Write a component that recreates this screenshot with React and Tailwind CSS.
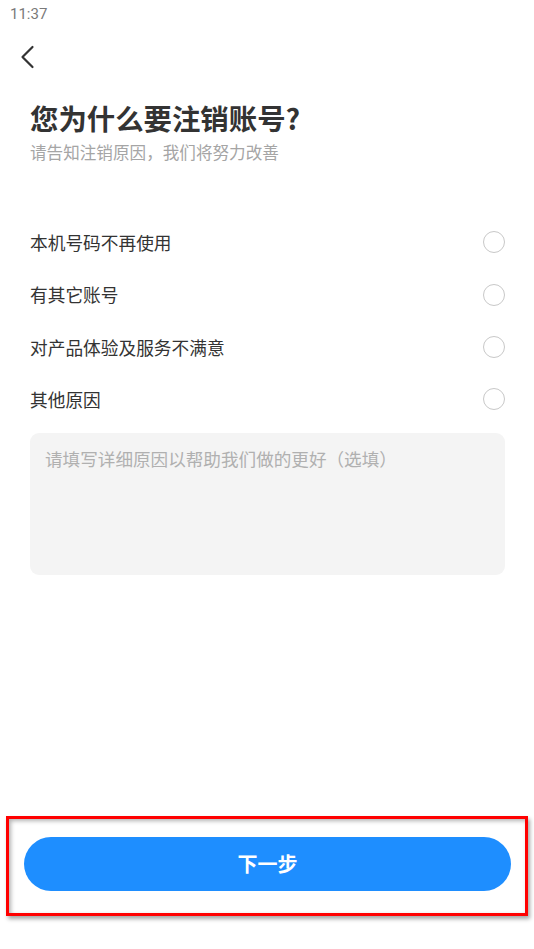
import React from "react";

const font = { fontFamily: '"Noto Sans CJK SC", Roboto, "Noto Sans", sans-serif' };

const options = ["本机号码不再使用", "有其它账号", "对产品体验及服务不满意", "其他原因"];

export default function App() {
  return (
    <div className="w-[534px] h-[949px] bg-white flex flex-col relative overflow-hidden" style={font}>
      <div className="h-[28px] pl-[10px] pt-[3px] text-[15px] leading-[22px] text-[#7a7a7a]" style={{ fontFamily: 'Roboto, "Noto Sans", sans-serif' }}>
        11:37
      </div>
      <div className="h-[58px] pl-[19px] pt-[17px]">
        <svg width="18" height="24" viewBox="0 0 18 24" fill="none">
          <path d="M13.5 2 L3.5 12 L13.5 22" stroke="#333" strokeWidth="2.2" strokeLinecap="round" strokeLinejoin="round" />
        </svg>
      </div>
      <div className="pl-[30px] pr-[29px] pt-[13px]">
        <h1 className="text-[28.4px] leading-[38px] font-bold text-[#333]">您为什么要注销账号?</h1>
        <p className="text-[16.6px] leading-[22px] text-[#a5a5a5] mt-[4px]">请告知注销原因，我们将努力改善</p>
      </div>
      <div className="mt-[53px] pl-[30px] pr-[29px] flex flex-col">
        {options.map((o) => (
          <div key={o} className="h-[52.4px] flex items-center justify-between">
            <span className="text-[17.7px] text-[#333]">{o}</span>
            <span className="w-[22px] h-[22px] rounded-full border border-[#c8c8c8]" />
          </div>
        ))}
      </div>
      <div className="ml-[30px] mr-[29px] mt-[7px] h-[142px] rounded-[9px] bg-[#f4f4f4] px-[15px] pt-[13px]">
        <span className="text-[17.6px] text-[#b0b0b0]">请填写详细原因以帮助我们做的更好（选填）</span>
      </div>
      <div className="flex-1" />
      <div className="mx-[6px] mb-[33px] h-[100px] border-[3px] border-[#ff0000] shadow-[2px_3px_4px_rgba(0,0,0,0.35),inset_2px_2px_4px_rgba(0,0,0,0.3)] px-[15px] pt-[18px]">
        <div className="h-[54px] w-[487px] rounded-full bg-[#1e8eff] flex items-center justify-center">
          <span className="text-white text-[20px] font-bold">下一步</span>
        </div>
      </div>
    </div>
  );
}
